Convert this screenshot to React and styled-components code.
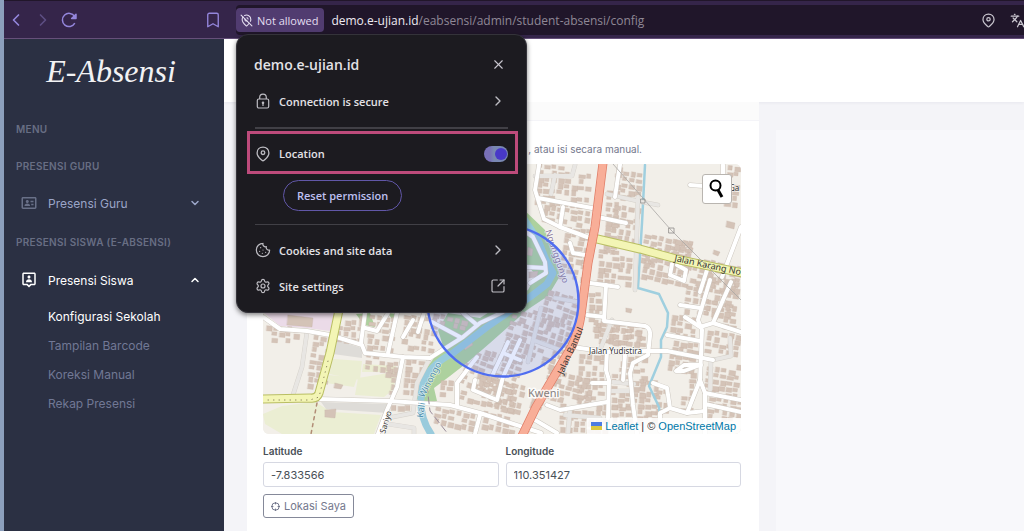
import styled, { createGlobalStyle } from "styled-components";
import { BiIdCard, BiUserPin } from "react-icons/bi";
import {
  Bookmark, ChevronDown, ChevronLeft, ChevronRight, ChevronUp, Cookie,
  Languages, MapPinOff, Settings, SquareArrowOutUpRight, X,
} from "lucide-react";

const GlobalStyle = createGlobalStyle`
  * {
    box-sizing: border-box;
  }

  body {
    margin: 0;
    background: #f4f4f8;
    font-family: Inter, "Liberation Sans", sans-serif;
    font-size: 12px;
  }

  button, input {
    font: inherit;
    margin: 0;
  }

  button {
    cursor: pointer;
  }

  a {
    text-decoration: none;
  }
`;

const Window = styled.div`
  display: flex;
  flex-direction: column;
  min-height: 100vh;
  border-left: 4px solid #8c9fbc;
`;

/* browser toolbar */
const Toolbar = styled.header`
  display: flex;
  align-items: center;
  height: 39px;
  padding: 4px 0 3px;
  background: #35254a;
  border-top: 1px solid #21162a;
  border-bottom: 1px solid #66507a;
`;

const IconButton = styled.button`
  display: flex;
  padding: 0;
  border: 0;
  background: none;
  color: ${({ $color }) => $color || "#c9c6cf"};
`;

const NavButtons = styled.div`
  display: flex;
  align-items: center;
  gap: 7px;
  width: 232px;
  padding: 0 14px 0 2px;

  button:last-child {
    margin-left: auto;
  }
`;

const AddressBar = styled.div`
  position: relative;
  display: flex;
  flex: 1;
  align-items: center;
  align-self: stretch;
  background: #20162a;
  border-radius: 4px 0 0 4px;
`;

const SiteChip = styled.button`
  display: flex;
  align-items: center;
  gap: 4px;
  height: 24px;
  padding: 0 6px 0 4px;
  border: 0;
  border-radius: 4px;
  background: #513c70;
  color: #e4def0;
  font-family: "Open Sans", "Noto Sans", sans-serif;
  font-size: 11px;
  font-weight: 500;
  white-space: nowrap;
`;

const Url = styled.span`
  flex: 1;
  padding-left: 7px;
  color: #8f8896;
  font-family: "Open Sans", "Noto Sans", sans-serif;
  font-size: 12px;
  white-space: nowrap;

  b {
    color: #eeeaf2;
    font-weight: 400;
  }
`;

const BarTools = styled.div`
  display: flex;
  gap: 14px;
  overflow: hidden;
  width: 43px;

  button {
    flex: none;
  }
`;

/* site information popup */
const Popup = styled.section`
  position: absolute;
  z-index: 5;
  top: 29px;
  left: 0;
  width: 291px;
  padding: 14px 8px 8px 10px;
  border: 1px solid #34333a;
  border-radius: 12px;
  background: #1c1b20;
  box-shadow: 0 2px 5px rgba(0, 0, 0, 0.5);
  color: #e3e2e6;
  font-family: "Open Sans", "Noto Sans", sans-serif;
  font-size: 11px;
  font-weight: 600;
`;

const PopupHead = styled.div`
  display: flex;
  align-items: center;
  justify-content: space-between;
  height: 30px;
  margin-bottom: 4px;
  padding: 0 12px 0 7px;

  h2 {
    margin: 0;
    font-size: 14px;
    font-weight: 600;
  }
`;

const PopupRow = styled.button`
  display: flex;
  align-items: center;
  gap: 8px;
  width: 100%;
  height: 36px;
  padding: 0 12px 0 8px;
  border: 0;
  background: none;
  color: inherit;
  text-align: left;

  span {
    flex: 1;
  }

  svg {
    color: #bebdc3;
  }
`;

const Divider = styled.hr`
  height: ${({ $height }) => $height};
  margin: ${({ $margin }) => $margin};
  border: 0;
  background: #414046;
`;

const LocationRow = styled.label`
  display: flex;
  align-items: center;
  gap: 8px;
  height: 43px;
  padding: 2px 7px 0 5px;
  border: 3px solid #bd4b7b;

  span {
    flex: 1;
  }

  svg {
    color: #bebdc3;
  }
`;

const Switch = styled.input`
  display: flex;
  align-items: center;
  justify-content: flex-end;
  appearance: none;
  width: 24px;
  height: 16px;
  margin: 0;
  border-radius: 8px;
  background: linear-gradient(90deg, #7870b7 6px, #7988b2 10px);

  &::after {
    content: "";
    width: 12px;
    height: 12px;
    margin-right: 1px;
    border-radius: 50%;
    background: #4838c8;
  }
`;

const ResetButton = styled.button`
  display: block;
  height: 31px;
  margin: 6px 0 13px 36px;
  padding: 0 13px;
  border: 1px solid #6157a8;
  border-radius: 16px;
  background: none;
  color: #bfc0f0;
`;

/* application */
const Layout = styled.div`
  display: flex;
  flex: 1;
`;

const Sidebar = styled.nav`
  width: 220px;
  padding: 8px 12px 0;
  background: #2b3043;
`;

const Logo = styled.a`
  display: block;
  height: 50px;
  margin-bottom: 24px;
  padding-right: 6px;
  color: #f2f2f4;
  font-family: "Liberation Serif", serif;
  font-size: 32px;
  font-style: italic;
  line-height: 48px;
  text-align: center;
`;

const MenuTitle = styled.h3`
  height: 16px;
  margin: 0 0 ${({ $gap }) => $gap};
  color: #686e83;
  font-size: 10px;
  font-weight: 600;
  letter-spacing: 0.03em;
  line-height: 16px;
`;

const MenuLink = styled.a`
  display: flex;
  align-items: center;
  gap: 10px;
  height: 30px;
  margin-bottom: ${({ $gap }) => $gap};
  padding: 0 11px 0 4px;
  color: ${({ $active }) => ($active ? "#fff" : "#9ba5c8")};

  span {
    flex: 1;
  }

  svg:first-child {
    color: ${({ $active }) => ($active ? "#fff" : "#697088")};
  }
`;

const SubMenu = styled.ul`
  margin: 0;
  padding: 0 0 0 32px;
  list-style: none;

  a {
    color: #717895;
    line-height: 29px;
  }

  a[aria-current] {
    color: #fff;
  }
`;

const Main = styled.main`
  flex: 1;
  min-width: 0;
`;

const PageHeader = styled.div`
  height: 63px;
  background: #fff;
  box-shadow: 0 1px 3px rgba(40, 40, 80, 0.06);
`;

const Columns = styled.div`
  display: grid;
  grid-template-columns: 512fr 248fr;
  gap: 17px;
  min-height: calc(100vh - 102px);
  padding-left: 23px;
`;

const Card = styled.section`
  padding: 0 18px 12px 16px;
  background: #fff;
`;

const CardHeader = styled.div`
  height: 19px;
  margin: 0 -18px 0 -16px;
  border-bottom: 1px solid #f4f4f8;
  background: #fbfbfb;
`;

const SidePanel = styled.aside`
  margin-top: 28px;
  background: #f8f8fb;
`;

const Hint = styled.p`
  height: 43px;
  margin: 0;
  padding: 20px 99px 0 0;
  color: #74788d;
  font-size: 10px;
  line-height: 16px;
  text-align: right;
`;

const MapBox = styled.div`
  position: relative;
  overflow: hidden;
  border-radius: 6px;
  background: #f2efe9;

  > svg {
    display: block;
    width: 100%;
    height: auto;
  }
`;

const MapSearch = styled.button`
  position: absolute;
  top: 10px;
  right: 9px;
  display: flex;
  align-items: center;
  justify-content: center;
  width: 30px;
  height: 30px;
  padding: 0;
  border: 1px solid #b9b5b0;
  border-radius: 3px;
  background: #fff;
`;

const Attribution = styled.div`
  position: absolute;
  right: 0;
  bottom: 0;
  display: flex;
  align-items: center;
  gap: 3px;
  padding: 0 5px 0 4px;
  background: rgba(255, 255, 255, 0.85);
  color: #333;
  font-family: "Liberation Sans", Arial, sans-serif;
  font-size: 11px;
  line-height: 16px;

  a {
    color: #0078a8;
  }
`;

const Fields = styled.div`
  display: grid;
  grid-template-columns: 1fr 1fr;
  gap: 7px;
  margin: 9px 0 7px;
`;

const Field = styled.label`
  display: flex;
  flex-direction: column;
  gap: 3px;
  color: #495057;
  font-size: 10px;
  font-weight: 600;
  line-height: 16px;

  input {
    width: 100%;
    height: 25px;
    padding: 0 7px;
    border: 1px solid #d6d8e2;
    border-radius: 3px;
    background: #fff;
    color: #495057;
    font-size: 11px;
    font-weight: 400;
  }
`;

const LocateButton = styled.button`
  display: flex;
  align-items: center;
  gap: 4px;
  height: 24px;
  padding: 0 7px;
  border: 1px solid #858999;
  border-radius: 3px;
  background: #fff;
  color: #74788d;
  font-size: 11px;
`;

const PinIcon = ({ size = 16 }) => (
  <svg width={size} height={size} viewBox="0 0 16 16" fill="none" stroke="currentColor" strokeWidth="1.3">
    <path d="M8 1.2c-3.5 0-5.9 2.4-5.9 5.7 0 3.6 3.3 5.8 4.9 7.4.6.6 1.4.6 2 0 1.6-1.6 4.9-3.8 4.9-7.4 0-3.3-2.4-5.7-5.9-5.7Z" />
    <circle cx="8" cy="6.7" r="1.8" />
  </svg>
);

const LockIcon = () => (
  <svg width="16" height="16" viewBox="0 0 16 16" fill="none" stroke="currentColor" strokeWidth="1.2">
    <rect x="2.3" y="6" width="11.4" height="9" rx="1.5" />
    <path d="M4.7 6V4.4a3.3 3.3 0 0 1 6.6 0V6M8 10v3" />
    <circle cx="8" cy="9.8" r="0.7" fill="currentColor" />
  </svg>
);

const ReloadIcon = () => (
  <svg width="18" height="18" viewBox="0 0 18 18" fill="none" stroke="currentColor" strokeWidth="1.5">
    <path d="M14.8 12.2A6.6 6.6 0 1 1 14.6 5.4" />
    <path d="M16 3.2v4.4h-4.4Z" fill="currentColor" strokeLinejoin="round" />
  </svg>
);

const TargetIcon = () => (
  <svg width="9" height="9" viewBox="0 0 9 9" fill="none" stroke="currentColor">
    <circle cx="4.5" cy="4.5" r="3.7" />
    <path d="M4.5 0v2.4M4.5 6.6V9M0 4.5h2.4M6.6 4.5H9" />
  </svg>
);

const UkraineFlag = () => (
  <svg width="11" height="8" viewBox="0 0 11 8">
    <path fill="#4C7BE1" d="M0 0h11v4H0z" />
    <path fill="#dcc83f" d="M0 4h11v4H0z" />
  </svg>
);

/* housing blocks: x, y, width, height, tilt */
const blocks = [
  [536, 166, 58, 44, 5], [542, 208, 50, 20, 10], [562, 228, 28, 54, 8],
  [606, 166, 11, 90, 4], [612, 206, 24, 40, 8], [622, 166, 20, 35, 8],
  [642, 238, 50, 30, 12], [598, 250, 36, 34, 5], [642, 262, 66, 22, 12],
  [672, 240, 22, 32, 12], [700, 262, 38, 30, 12], [726, 166, 14, 40, 5],
  [686, 276, 48, 40, 8], [725, 282, 15, 45, 8], [704, 300, 20, 20, 5],
  [588, 292, 12, 50, 2], [608, 328, 36, 20, 5], [592, 322, 52, 24, 5],
  [578, 354, 30, 48, 3], [612, 356, 32, 52, 3], [545, 374, 50, 30, 12],
  [560, 404, 46, 28, 3], [612, 406, 20, 26, 2], [638, 380, 18, 50, 4],
  [670, 316, 30, 22, 8], [672, 342, 27, 18, 8], [682, 372, 16, 40, 3],
  [706, 332, 34, 24, 8], [706, 362, 34, 34, 8], [708, 398, 32, 24, 8],
  [656, 390, 13, 22, 4], [668, 355, 26, 15, 8], [530, 398, 12, 12, 18],
  [265, 326, 34, 16, 5], [310, 336, 18, 54, 8], [337, 314, 24, 28, 4],
  [368, 316, 26, 35, 7], [366, 355, 33, 16, 5], [402, 316, 34, 38, 8],
  [404, 360, 22, 38, 4], [384, 366, 14, 30, 7], [440, 380, 16, 20, 5],
  [464, 352, 54, 42, 18], [506, 316, 60, 48, 18], [460, 396, 58, 10, 13],
  [434, 410, 38, 20, 12], [482, 416, 50, 17, 12], [476, 380, 46, 28, 14],
  [390, 405, 22, 8, 0], [536, 292, 40, 30, 18], [432, 316, 34, 14, 12],
];

const minorRoads = [
  "M539 165L535 190L544 219L560 227L587 237", "M538 198L592 208", "M563 207L560 227",
  "M598 217L626 223", "M620 165L618 177L615 197", "M690 185L703 186",
  "M741 227L722 277", "M723 165V176", "M590 283L618 287", "M570 243L573 253L585 255",
  "M707 270L700 292", "M606 285L604 321L645 326Q651 328 650 336L648 355L633 363L630 373L633 405L637 433",
  "M587 315L604 317", "M573 347L607 352L647 351L667 351L713 360", "M607 352L606 370L609 380L608 418",
  "M625 355L623 380", "M680 305L700 308", "M710 280L698 320L702 330L700 380L705 393L741 400",
  "M685 317L700 327L713 323L741 332M713 323L723 300L731 282", "M667 335L700 341",
  "M701 365H684L676 371L684 371L700 365", "M653 383L667 388L670 408L660 413V431M670 408L687 413L705 411",
  "M700 380L687 413", "M547 405L560 410L607 402", "M592 383L608 383", "M535 420L557 433",
  "M705 393V434M705 404L741 412", "M672 264L670 275L684 281L686 270L677 265",
  "M263 317L280 329L307 331L330 335L362 345L365 353L403 357L430 358",
  "M365 313L361 343", "M397 313L388 353", "M403 357L397 387L387 410L378 434",
  "M318 399L390 401L450 405L480 413L541 433", "M413 320L403 337", "M388 313L377 331L365 328",
  "M424 313L418 332", "M430 358L463 337L480 323L503 312", "M477 357L457 383V405",
  "M475 380L473 390L497 400L503 377L520 340", "M480 415L475 434", "M463 313L477 325M432 322L460 337",
  "M493 374L508 342M503 353L520 360", "M526 232L533 237L545 262L546 273L530 283M527 267L545 268",
];

const greyRoads = [
  "M307 332L302 367L293 395", "M638 197L635 290", "M607 194L642 202L658 205",
  "M430 358L417 383L413 413L388 418", "M388 424L414 428V434", "M711 360L710 390",
  "M713 360L731 356L730 338", "M535 176H572L575 165M555 175L551 194", "M600 350L612 320",
  "M565 415L600 418M570 410L568 433", "M613 382L634 384M610 391H630",
  "M555 298L578 302M541 308L528 362M533 340L560 350",
];

const drawBlock = ([x, y, w, h, tilt], n) => {
  const houses = [];
  for (let row = 0; row * 6 < h - 2; row++) {
    for (let col = 0; col * 7 < w - 2; col++) {
      const seed = (n * 37 + row * 17 + col * 29 + row * col * 7) % 23;
      if (seed % 6 === 1) continue;
      houses.push(
        <rect
          key={`${row}-${col}`}
          x={x + col * 7 + (seed % 3) * 0.6}
          y={y + row * 6 + (seed % 4) * 0.5}
          width={4 + (seed % 4) * 0.8}
          height={3.5 + (seed % 3) * 0.8}
        />
      );
    }
  }
  return <g key={n} transform={`rotate(${tilt} ${x + w / 2} ${y + h / 2})`}>{houses}</g>;
};

const river = "M524 219L538 240L546 260L553 273L547 284L530 297L487 327L453 353Q428 366 423 384Q416 412 431 434";
const stream = "M645 165L642 223L638 288L659 294L668 313L667 327L661 340V357L649 386L659 407L660 422";
const bantul = "M603 163L595 227L588 263L581 315Q579 330 572 346L536 407L522 436";
const yellows = ["M593 238L640 249L680 260L743 273", "M339 310L330 353L319 393Q317 399 310 398L261 399"];

const StreetMap = () => (
  <svg viewBox="263 164 478 270" role="img" aria-label="Peta lokasi sekolah" strokeLinecap="round" strokeLinejoin="round">
    <rect x="263" y="164" width="478" height="270" fill="#f2efe9" />
    <path fill="#ebdbe8" d="M263 310H336L330 331L307 328L280 326L263 312Z" />
    <path fill="#ebeed3" d="M333 359L362 361L360 380L329 374ZM363 364L396 366L395 372H362ZM329 375L357 378L354 387L326 383ZM358 378L395 372L394 389L384 397L355 395ZM282 406L315 402L332 412L381 415L374 434H282L265 424L263 414Z" />
    <path fill="#dedcd8" d="M336 340L362 348V358L333 354ZM321 402L390 404L388 413L326 409Z" />
    <path fill="#add19e" d="M521 207L545 230L556 262L560 276L548 296L527 310L490 343L468 362L450 376L434 388L437 401L428 402L416 399L425 370L443 346L438 330L448 313L480 318L508 300L528 290L536 275L524 262ZM370 313L375 327L364 325L356 314ZM388 313L397 314L395 324Z" />
    <g fill="#d4c3b7" stroke="#c6b2a5" strokeWidth="0.3">
      {blocks.map(drawBlock)}
      <path d="M288 315L313 318L312 327L287 325ZM325 410L336 409L335 418L325 417ZM335 383L343 385L341 389L334 388ZM626 308L632 309L631 313L626 312ZM727 221L735 223L734 229L726 227ZM714 250L720 252L718 256L713 254Z" />
      <path d="M528 247L533 249L532 256L527 255ZM529 272L538 271L537 277L529 278ZM463 344L471 340L473 345L465 350Z" />
    </g>
    <g fill="none">
      <path d={river} stroke="#99cbdc" strokeWidth="7" />
      <path d={stream} stroke="#9fcfdf" strokeWidth="2.5" />
      <g stroke="#d5d1ca" strokeWidth="4.6">{greyRoads.map((d) => <path key={d} d={d} />)}</g>
      <g stroke="#e8e6e3" strokeWidth="3.8">{greyRoads.map((d) => <path key={d} d={d} />)}</g>
      <g stroke="#cdc8c1" strokeWidth="5">{minorRoads.map((d) => <path key={d} d={d} />)}</g>
      <g stroke="#fff" strokeWidth="4">{minorRoads.map((d) => <path key={d} d={d} />)}</g>
      {yellows.map((d) => <path key={d} d={d} stroke="#b9be63" strokeWidth="9" />)}
      {yellows.map((d) => <path key={d} d={d} stroke="#f3f5b5" strokeWidth="7" />)}
      <path d={bantul} stroke="#df7c66" strokeWidth="9" />
      <path d={bantul} stroke="#f8ae98" strokeWidth="7.5" />
      <path d="M268 400H310L319 397L328 361" stroke="#8e8560" strokeDasharray="0.5 5" />
      <path d="M317 403L311 434" stroke="#b18c76" strokeWidth="1.5" strokeDasharray="3 4" />
      <path d="M427 386L430 411L448 434" stroke="#9a8c9b" strokeDasharray="7 4" />
      <path d="M613 164L671 230L741 300" stroke="#aaa7a4" strokeWidth="0.8" />
      <path d="M669 228h5v5h-5zM641 199h4v4h-4z" stroke="#8e8b89" strokeWidth="0.8" />
    </g>
    <g fontFamily="Noto Sans, sans-serif" fontSize="9" fill="#363634" stroke="#fff" strokeWidth="1.5" paintOrder="stroke" strokeOpacity="0.6">
      <text transform="translate(674 261) rotate(12)" stroke="none">Jalan Karang No</text>
      <text transform="translate(563 375) rotate(-66)" stroke="none">Jalan Bantul</text>
      <text x="589" y="354" fontSize="8">Jalan Yudistira</text>
      <text x="729" y="191" fontSize="8">Ga</text>
      <text transform="translate(385 434) rotate(-73)" fontSize="8">Sariyo</text>
      <text x="528" y="397" fontSize="11" fill="#85807d" strokeWidth="3" strokeOpacity="0.8">Kweni</text>
      <text transform="translate(423 418) rotate(-82)" fill="#4f8fae">Kali</text>
      <text transform="translate(424 398) rotate(-63)" fill="#4f8fae">Winongo</text>
      <text transform="translate(545 231) rotate(71)" fontSize="9" fill="#8b7a9b">Ngunggunyo</text>
    </g>
    <circle cx="503" cy="301" r="75.5" fill="#5377f5" fillOpacity="0.16" stroke="#4f6df0" strokeWidth="2.5" />
  </svg>
);

const subPages = ["Konfigurasi Sekolah", "Tampilan Barcode", "Koreksi Manual", "Rekap Presensi"];

const SiteInfo = () => (
  <Popup>
    <PopupHead>
      <h2>demo.e-ujian.id</h2>
      <IconButton type="button" aria-label="Close"><X size={15} strokeWidth={1.8} /></IconButton>
    </PopupHead>
    <PopupRow type="button">
      <LockIcon />
      <span>Connection is secure</span>
      <ChevronRight size={16} />
    </PopupRow>
    <Divider $height="2px" $margin="8px 10px 2px 8px" />
    <LocationRow>
      <PinIcon />
      <span>Location</span>
      <Switch type="checkbox" role="switch" defaultChecked />
    </LocationRow>
    <ResetButton type="button">Reset permission</ResetButton>
    <Divider $height="1px" $margin="0 10px 7px 8px" />
    <PopupRow type="button">
      <Cookie size={16} strokeWidth={1.8} />
      <span>Cookies and site data</span>
      <ChevronRight size={16} />
    </PopupRow>
    <PopupRow type="button">
      <Settings size={16} strokeWidth={1.8} />
      <span>Site settings</span>
      <SquareArrowOutUpRight size={16} strokeWidth={1.8} />
    </PopupRow>
  </Popup>
);

const App = () => {
  return (
    <Window>
      <GlobalStyle />
      <Toolbar>
        <NavButtons>
          <IconButton type="button" aria-label="Back" $color="#9486dc"><ChevronLeft size={20} /></IconButton>
          <IconButton type="button" aria-label="Forward" $color="#5d4e83"><ChevronRight size={20} /></IconButton>
          <IconButton type="button" aria-label="Reload" $color="#9486dc"><ReloadIcon /></IconButton>
          <IconButton type="button" aria-label="Bookmark" $color="#9486dc"><Bookmark size={18} strokeWidth={1.8} /></IconButton>
        </NavButtons>
        <AddressBar>
          <SiteChip type="button">
            <MapPinOff size={13} />
            Not allowed
          </SiteChip>
          <Url><b>demo.e-ujian.id</b>/eabsensi/admin/student-absensi/config</Url>
          <BarTools>
            <IconButton type="button" aria-label="Location"><PinIcon size={15} /></IconButton>
            <IconButton type="button" aria-label="Translate"><Languages size={15} /></IconButton>
          </BarTools>
          <SiteInfo />
        </AddressBar>
      </Toolbar>

      <Layout>
        <Sidebar>
          <Logo href="#">E-Absensi</Logo>
          <MenuTitle $gap="21px">MENU</MenuTitle>
          <MenuTitle $gap="14px">PRESENSI GURU</MenuTitle>
          <MenuLink href="#" $gap="16px">
            <BiIdCard size={18} />
            <span>Presensi Guru</span>
            <ChevronDown size={12} strokeWidth={3} />
          </MenuLink>
          <MenuTitle $gap="15px">PRESENSI SISWA (E-ABSENSI)</MenuTitle>
          <MenuLink href="#" $active $gap="7px">
            <BiUserPin size={18} />
            <span>Presensi Siswa</span>
            <ChevronUp size={12} strokeWidth={3} />
          </MenuLink>
          <SubMenu>
            {subPages.map((page, i) => (
              <li key={page}>
                <a href="#" aria-current={i === 0 ? "page" : undefined}>{page}</a>
              </li>
            ))}
          </SubMenu>
        </Sidebar>

        <Main>
          <PageHeader />
          <Columns>
            <Card>
              <CardHeader />
              <Hint>, atau isi secara manual.</Hint>
              <MapBox>
                <StreetMap />
                <MapSearch type="button" aria-label="Cari">
                  <svg width="18" height="22" viewBox="0 0 18 22" fill="none" stroke="#000">
                    <circle cx="7.5" cy="7.5" r="5" strokeWidth="2" />
                    <path d="M10 12L14 19" strokeWidth="3" />
                  </svg>
                </MapSearch>
                <Attribution>
                  <UkraineFlag />
                  <a href="#">Leaflet</a>
                  <span>| ©</span>
                  <a href="#">OpenStreetMap</a>
                </Attribution>
              </MapBox>
              <Fields>
                <Field>
                  Latitude
                  <input type="text" defaultValue="-7.833566" />
                </Field>
                <Field>
                  Longitude
                  <input type="text" defaultValue="110.351427" />
                </Field>
              </Fields>
              <LocateButton type="button"><TargetIcon /> Lokasi Saya</LocateButton>
            </Card>
            <SidePanel />
          </Columns>
        </Main>
      </Layout>
    </Window>
  );
};

export default App;
